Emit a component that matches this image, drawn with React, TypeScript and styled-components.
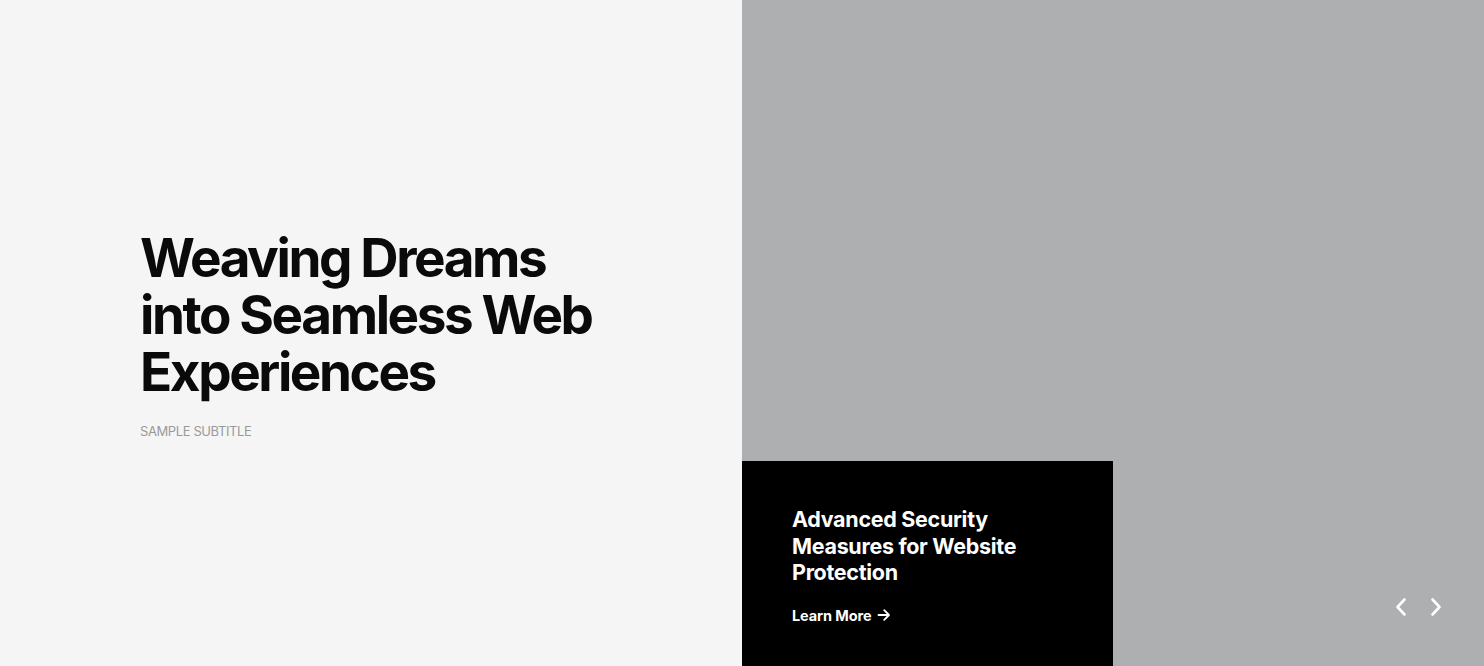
import React from "react";
import styled, { createGlobalStyle } from "styled-components";

const Global = createGlobalStyle`
  html, body { margin: 0; padding: 0; }
  body { font-family: Inter, "Noto Sans", sans-serif; }
  * { box-sizing: border-box; }
`;

const Page = styled.div`
  display: grid;
  grid-template-columns: 742px 1fr;
  width: 100%;
  height: 666px;
  overflow: hidden;
`;

const Left = styled.section`
  background: #f5f5f5;
  display: flex;
  flex-direction: column;
  justify-content: center;
  padding-left: 140px;
  padding-top: 2px;
`;

const Title = styled.h1`
  margin: 0;
  font-family: Inter, sans-serif;
  font-weight: 700;
  font-size: 53px;
  line-height: 57px;
  letter-spacing: -2.4px;
  color: #0a0a0a;
  max-width: 480px;
`;

const Subtitle = styled.p`
  margin: 22px 0 0;
  font-size: 13px;
  letter-spacing: -0.4px;
  color: #9a9a9a;
  text-transform: uppercase;
`;

const Right = styled.section`
  background: #aeafb1;
  display: flex;
  flex-direction: column;
  justify-content: flex-end;
  position: relative;
`;

const Card = styled.div`
  width: 371px;
  height: 205px;
  background: #000;
  color: #fff;
  padding: 45px 50px 0;
  display: flex;
  flex-direction: column;
`;

const CardTitle = styled.h2`
  margin: 0;
  font-size: 21.5px;
  font-weight: 700;
  line-height: 26.5px;
  letter-spacing: -0.3px;
  max-width: 250px;
`;

const LearnMore = styled.a`
  margin-top: 21px;
  display: inline-flex;
  align-items: center;
  gap: 6px;
  font-size: 14.5px;
  font-weight: 700;
  letter-spacing: -0.1px;
  color: #fff;
  text-decoration: none;
`;

const Nav = styled.div`
  position: absolute;
  right: 40px;
  bottom: 47px;
  display: flex;
  gap: 19px;
`;

const NavButton = styled.button`
  background: none;
  border: 0;
  padding: 0;
  width: 16px;
  height: 24px;
  display: flex;
  align-items: center;
  justify-content: center;
  cursor: pointer;
`;

const Chevron = ({ dir }: { dir: "left" | "right" }) => (
  <svg width="12" height="20" viewBox="0 0 12 20" fill="none">
    <path
      d={dir === "left" ? "M9.5 2.5 L2.5 10 L9.5 17.5" : "M2.5 2.5 L9.5 10 L2.5 17.5"}
      stroke="#fff"
      strokeWidth="2.6"
      strokeLinecap="round"
      strokeLinejoin="round"
    />
  </svg>
);

const Arrow = () => (
  <svg width="14" height="14" viewBox="0 0 14 14" fill="none">
    <path
      d="M1.5 7 H12 M7.2 2.2 L12 7 L7.2 11.8"
      stroke="#fff"
      strokeWidth="1.8"
      strokeLinecap="round"
      strokeLinejoin="round"
    />
  </svg>
);

export default function App() {
  return (
    <>
      <Global />
      <Page>
        <Left>
          <Title>Weaving Dreams into Seamless Web Experiences</Title>
          <Subtitle>Sample Subtitle</Subtitle>
        </Left>
        <Right>
          <Card>
            <CardTitle>Advanced Security Measures for Website Protection</CardTitle>
            <LearnMore href="#">
              Learn More <Arrow />
            </LearnMore>
          </Card>
          <Nav>
            <NavButton aria-label="Previous">
              <Chevron dir="left" />
            </NavButton>
            <NavButton aria-label="Next">
              <Chevron dir="right" />
            </NavButton>
          </Nav>
        </Right>
      </Page>
    </>
  );
}
